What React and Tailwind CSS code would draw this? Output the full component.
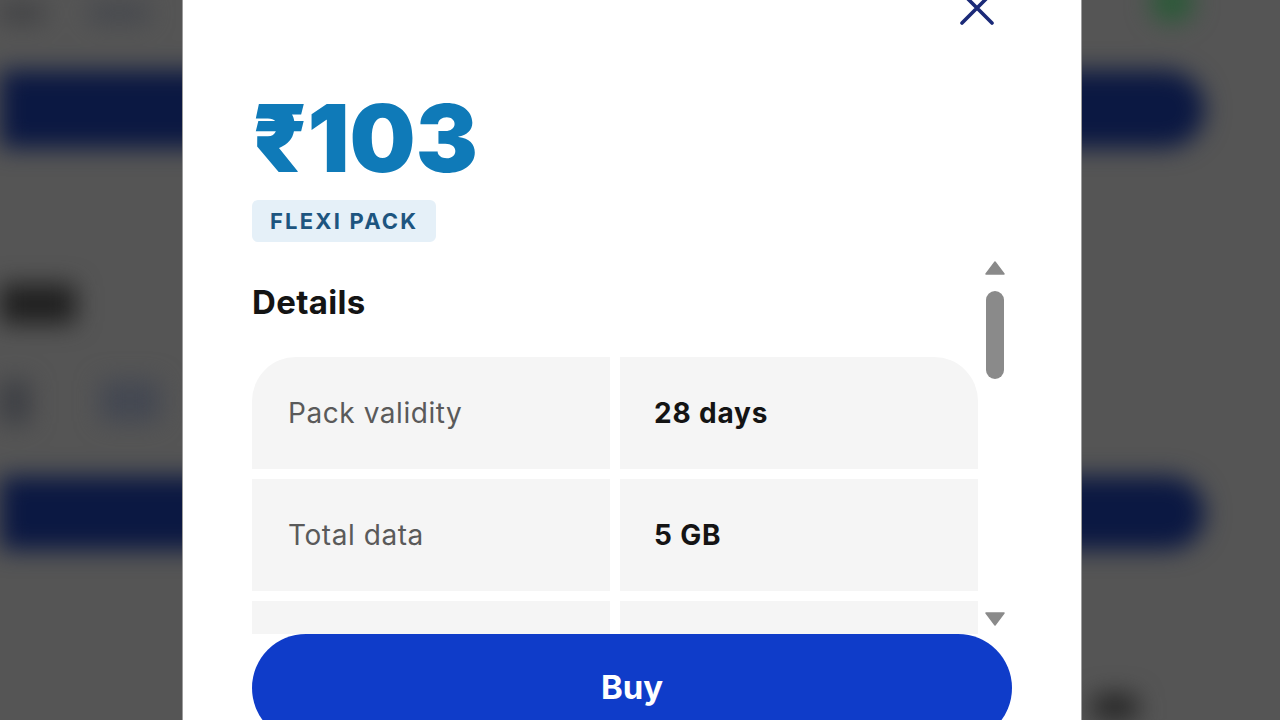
import React from "react";

const DETAILS = [
  { label: "Pack validity", value: "28 days" },
  { label: "Total data", value: "5 GB" },
  { label: "", value: "" },
];

// blurred page that sits behind the sheet
const BackdropPage = () => (
  <div aria-hidden className="absolute inset-0 overflow-hidden">
    <div className="flex h-full flex-col blur-[12px]">
      <div className="flex h-[40px] items-start justify-between">
        <div className="flex gap-[45px] pt-[4px]">
          <div className="h-[18px] w-[44px] rounded bg-[#3f4043]" />
          <div className="h-[18px] w-[60px] rounded bg-[#44474d]" />
        </div>
        <div className="-mt-[18px] mr-[86px] h-[40px] w-[44px] rounded-full bg-[#2b5a38]" />
      </div>
      <div className="mt-[30px] h-[78px] w-[1205px] rounded-r-full bg-[#0b1842]" />
      <div className="mt-[136px] h-[40px] w-[76px] rounded-r-md bg-[#202020]" />
      <div className="mt-[56px] flex gap-[70px]">
        <div className="h-[44px] w-[30px] rounded bg-[#3d3f44]" />
        <div className="h-[42px] w-[60px] rounded bg-[#444852]" />
      </div>
      <div className="mt-[52px] h-[74px] w-[1205px] rounded-r-full bg-[#0b1842]" />
      <div className="mt-auto ml-[1092px] h-[26px] w-[46px] rounded-t-lg bg-[#262626]" />
    </div>
  </div>
);

const CloseIcon = () => (
  <svg viewBox="0 0 38 38" className="-mt-[11px] h-[38px] w-[38px]" fill="none">
    <path d="M4 4L34 34M34 4L4 34" stroke="#1b2a78" strokeWidth="3.6" strokeLinecap="round" />
  </svg>
);

const Triangle = ({ down }) => (
  <svg viewBox="0 0 22 16" className="h-[16px] w-[22px]">
    <path
      d={down ? "M2 3h18L11 15z" : "M11 1l9 12H2z"}
      fill="#8a8a8a"
      stroke="#8a8a8a"
      strokeWidth="1.5"
      strokeLinejoin="round"
    />
  </svg>
);

const PackSheet = () => (
  <section className="ml-[183px] flex h-full w-[898px] flex-col bg-white px-[69px] shadow-[0_0_0_1px_#9d9d9d]">
    <div className="flex h-[26px] shrink-0 justify-end pr-[16px]">
      <CloseIcon />
    </div>

    <p className="mt-[66px] text-[93px] leading-[92px] font-black text-[#0f7ab8]">₹103</p>

    <div className="mt-[16px] flex">
      <span className="flex h-[42px] items-center rounded-[6px] bg-[#e5f0f8] px-[18px] text-[22px] font-bold tracking-[0.1em] text-[#1d5580]">
        FLEXI PACK
      </span>
    </div>

    <div className="mt-[16px] flex h-[376px] shrink-0">
      <div className="flex-1 overflow-hidden pt-[28px]">
        <h3 className="text-[33px] leading-[32px] font-bold tracking-[0.01em] text-[#141414]">Details</h3>
        <div className="mt-[39px] grid grid-cols-2 gap-[10px]">
          {DETAILS.map((row, i) => (
            <React.Fragment key={i}>
              <div
                className={`flex h-[112px] items-center bg-[#f5f5f5] pl-[36px] text-[28px] tracking-[0.02em] text-[#5a5a5a] ${i === 0 ? "rounded-tl-[44px]" : ""}`}
              >
                {row.label}
              </div>
              <div
                className={`flex h-[112px] items-center bg-[#f5f5f5] pl-[34px] text-[28px] font-bold tracking-[0.03em] text-[#141414] ${i === 0 ? "rounded-tr-[44px]" : ""}`}
              >
                {row.value}
              </div>
            </React.Fragment>
          ))}
        </div>
      </div>
      <div className="flex w-[34px] flex-col items-center pt-[3px] pb-[8px]">
        <Triangle />
        <div className="mt-[14px] h-[88px] w-[18px] rounded-full bg-[#8a8a8a]" />
        <div className="flex-1" />
        <Triangle down />
      </div>
    </div>

    <button className="flex h-[108px] w-full shrink-0 items-center justify-center rounded-full bg-[#0f3cc9] text-[33px] font-bold text-white">
      Buy
    </button>
  </section>
);

export default function App() {
  return (
    <div className="relative h-[720px] w-[1280px] overflow-hidden bg-[#555555] font-['Inter','Noto_Sans',sans-serif]">
      <BackdropPage />
      <div className="absolute inset-0 flex">
        <PackSheet />
      </div>
    </div>
  );
}
